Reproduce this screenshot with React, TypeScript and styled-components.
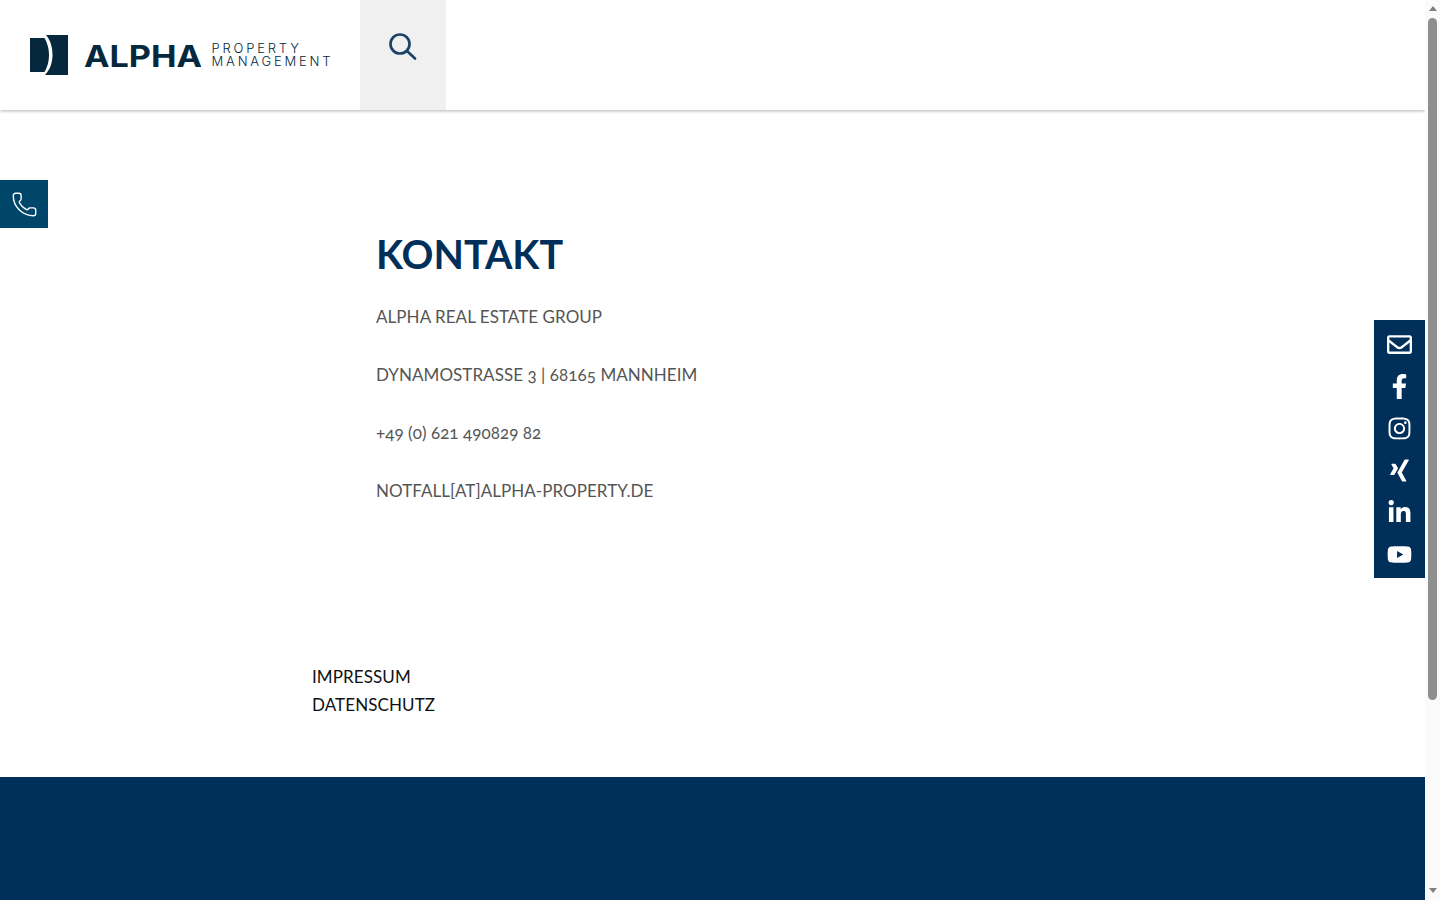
import React from "react";
import styled, { createGlobalStyle } from "styled-components";
import { Phone } from "lucide-react";
import { FaFacebookF, FaInstagram, FaLinkedinIn, FaRegEnvelope, FaXing, FaYoutube } from "react-icons/fa";

const Global = createGlobalStyle`
  body {
    margin: 0;
    background: #fff;
    font-family: Lato, "Open Sans", sans-serif;
  }
`;

const Page = styled.div`
  position: relative;
  width: calc(100% - 15px);
  min-height: 1146px;
  display: flex;
  flex-direction: column;
`;

const Header = styled.header`
  height: 110px;
  display: flex;
  background: #fff;
  box-shadow: 0 1px 3px rgba(0, 0, 0, 0.3);
`;

const LogoLink = styled.a`
  width: 360px;
  padding-left: 30px;
  box-sizing: border-box;
  display: flex;
  align-items: center;
  color: #06283f;
`;

const LogoMark = styled.svg`
  width: 38px;
  height: 40px;
  margin-right: 16px;
  flex: none;
`;

const LogoName = styled.span`
  display: inline-block;
  font-family: Inter, sans-serif;
  font-weight: 700;
  font-size: 30px;
  line-height: 1;
  padding-top: 1px;
  margin-right: 24px;
  transform: scaleX(1.14);
  transform-origin: left center;
`;

const LogoSub = styled.span`
  font-family: Inter, Lato, sans-serif;
  font-weight: 300;
  font-size: 13px;
  line-height: 13px;
  letter-spacing: 2.8px;
  white-space: nowrap;
`;

const SearchButton = styled.button`
  width: 86px;
  height: 110px;
  border: 0;
  padding: 0 0 16px;
  background: #f0f0f0;
  color: #1b4468;
  display: flex;
  align-items: center;
  justify-content: center;
`;

const PhoneTab = styled.a`
  position: absolute;
  left: 0;
  top: 180px;
  width: 48px;
  height: 48px;
  background: #00466b;
  color: #fff;
  display: flex;
  align-items: center;
  justify-content: center;
`;

const SocialBar = styled.nav`
  position: absolute;
  right: 0;
  top: 320px;
  width: 51px;
  height: 258px;
  padding: 3px 1px 3px 0;
  box-sizing: border-box;
  background: #002f5a;
  color: #fff;
  display: flex;
  flex-direction: column;
  align-items: center;
  justify-content: space-around;
`;

const SocialLink = styled.a`
  height: 42px;
  display: flex;
  align-items: center;
  justify-content: center;
  font-size: 25px;
`;

const Main = styled.main`
  width: 801px;
  margin: 0 auto;
  padding-top: 120px;
`;

const Contact = styled.section`
  padding-left: 64px;
`;

const Title = styled.h1`
  margin: 0 0 25px;
  font-size: 39.5px;
  line-height: 48px;
  font-weight: 700;
  color: #002f5a;
`;

const Line = styled.p`
  margin: 0 0 30px;
  font-size: 17px;
  line-height: 28px;
  font-weight: 400;
  letter-spacing: 0.05px;
  color: #555;
  font-variant-numeric: oldstyle-nums;
`;

const LegalLinks = styled.div`
  margin-top: 158px;
  padding-bottom: 58px;
`;

const LegalLink = styled.a`
  display: block;
  font-size: 17px;
  line-height: 28px;
  letter-spacing: 0.1px;
  color: #111;
`;

const Footer = styled.footer`
  flex: 1;
  background: #002f5a;
`;

const ScrollTrack = styled.div`
  position: fixed;
  top: 0;
  right: 0;
  bottom: 0;
  width: 15px;
  background: #fbfbfb;
  display: flex;
  flex-direction: column;
  align-items: center;
  padding: 6px 0 7px;
  box-sizing: border-box;
`;

const ScrollArrow = styled.div<{ $down?: boolean }>`
  width: 0;
  height: 0;
  border-left: 4.5px solid transparent;
  border-right: 4.5px solid transparent;
  ${(p) => (p.$down ? "border-top: 5px solid #808080; margin-top: auto;" : "border-bottom: 5px solid #808080;")}
`;

const ScrollThumb = styled.div`
  width: 9px;
  height: 682px;
  margin-top: 7px;
  border-radius: 5px;
  background: #8f8f8f;
`;

const socials = [
  { name: "mail", icon: <FaRegEnvelope /> },
  { name: "facebook", icon: <FaFacebookF /> },
  { name: "instagram", icon: <FaInstagram /> },
  { name: "xing", icon: <FaXing /> },
  { name: "linkedin", icon: <FaLinkedinIn /> },
  { name: "youtube", icon: <FaYoutube /> },
];

export default function App() {
  return (
    <Page>
      <Global />
      <Header>
        <LogoLink>
          <LogoMark viewBox="0 0 38 40">
            <path fill="currentColor" d="M0 3h14.500c3 5 4.500 11 4.500 17s-1.500 12-4.500 17H0z" />
            <path fill="currentColor" d="M16 0h22v40H15c5.500-6 7.500-13 7.500-20S21 6 16 0z" />
          </LogoMark>
          <LogoName>ALPHA</LogoName>
          <LogoSub>
            PROPERTY
            <br />
            MANAGEMENT
          </LogoSub>
        </LogoLink>
        <SearchButton aria-label="Suche">
          <svg width="28" height="28" viewBox="0 0 28 28" fill="none" stroke="currentColor" strokeWidth="2.7" strokeLinecap="round">
            <circle cx="11" cy="11" r="9.500" />
            <path d="M18 18l8 7.500" />
          </svg>
        </SearchButton>
      </Header>

      <PhoneTab aria-label="Telefon">
        <Phone size={27} strokeWidth={1.2} />
      </PhoneTab>

      <SocialBar>
        {socials.map((s) => (
          <SocialLink key={s.name} aria-label={s.name}>
            {s.icon}
          </SocialLink>
        ))}
      </SocialBar>

      <Main>
        <Contact>
          <Title>KONTAKT</Title>
          <Line>ALPHA REAL ESTATE GROUP</Line>
          <Line>DYNAMOSTRASSE 3 | 68165 MANNHEIM</Line>
          <Line>+49 (0) 621 490829 82</Line>
          <Line>NOTFALL[AT]ALPHA-PROPERTY.DE</Line>
        </Contact>
        <LegalLinks>
          <LegalLink>IMPRESSUM</LegalLink>
          <LegalLink>DATENSCHUTZ</LegalLink>
        </LegalLinks>
      </Main>

      <Footer />
      <ScrollTrack>
        <ScrollArrow />
        <ScrollThumb />
        <ScrollArrow $down />
      </ScrollTrack>
    </Page>
  );
}
